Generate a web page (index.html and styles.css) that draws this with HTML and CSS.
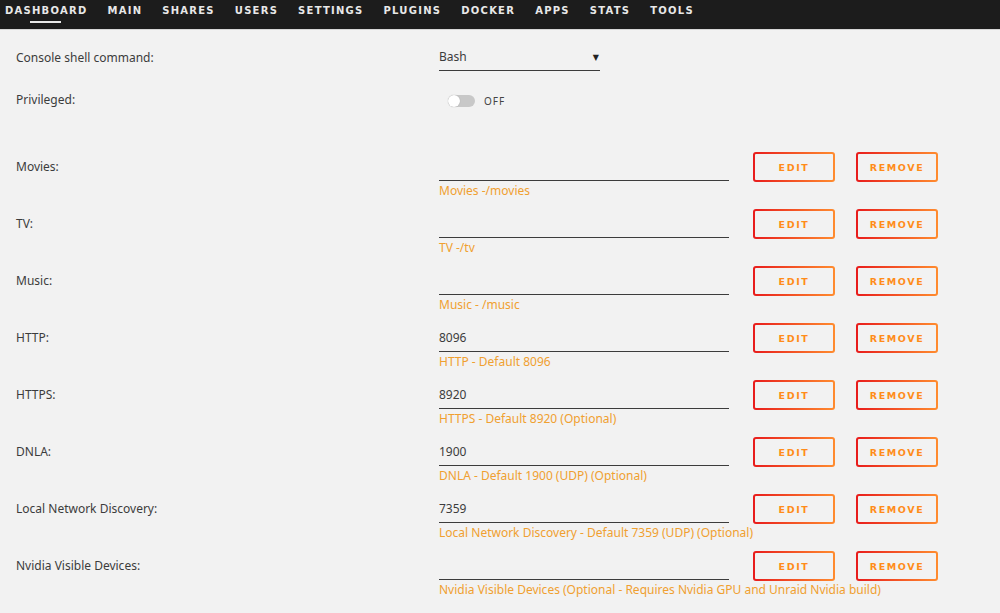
FILE: index.html
```html
<!DOCTYPE html>
<html>
<head>
    <title>Docker - Edit Container</title>
    <link rel="stylesheet" href="styles.css">
</head>
<body>
    <div class="nav">
        <a class="nav-item active">DASHBOARD</a>
        <a class="nav-item">MAIN</a>
        <a class="nav-item">SHARES</a>
        <a class="nav-item">USERS</a>
        <a class="nav-item">SETTINGS</a>
        <a class="nav-item">PLUGINS</a>
        <a class="nav-item">DOCKER</a>
        <a class="nav-item">APPS</a>
        <a class="nav-item">STATS</a>
        <a class="nav-item">TOOLS</a>
    </div>

    <div class="content">
        <div class="top-row">
            <div class="label">Console shell command:</div>
            <div class="select">Bash<span class="caret">▼</span></div>
        </div>
        <div class="top-row">
            <div class="label">Privileged:</div>
            <div class="switch"><span class="track"><span class="knob"></span></span><span class="switch-text">OFF</span></div>
        </div>

        <div class="config-list">
            <div class="config-row">
                <div class="label">Movies:</div>
                <div class="field"><div class="input"></div><div class="desc">Movies -/movies</div></div>
                <button class="grad-btn">EDIT</button>
                <button class="grad-btn">REMOVE</button>
            </div>
            <div class="config-row">
                <div class="label">TV:</div>
                <div class="field"><div class="input"></div><div class="desc">TV -/tv</div></div>
                <button class="grad-btn">EDIT</button>
                <button class="grad-btn">REMOVE</button>
            </div>
            <div class="config-row">
                <div class="label">Music:</div>
                <div class="field"><div class="input"></div><div class="desc">Music - /music</div></div>
                <button class="grad-btn">EDIT</button>
                <button class="grad-btn">REMOVE</button>
            </div>
            <div class="config-row">
                <div class="label">HTTP:</div>
                <div class="field"><div class="input">8096</div><div class="desc">HTTP - Default 8096</div></div>
                <button class="grad-btn">EDIT</button>
                <button class="grad-btn">REMOVE</button>
            </div>
            <div class="config-row">
                <div class="label">HTTPS:</div>
                <div class="field"><div class="input">8920</div><div class="desc">HTTPS - Default 8920 (Optional)</div></div>
                <button class="grad-btn">EDIT</button>
                <button class="grad-btn">REMOVE</button>
            </div>
            <div class="config-row">
                <div class="label">DNLA:</div>
                <div class="field"><div class="input">1900</div><div class="desc">DNLA - Default 1900 (UDP) (Optional)</div></div>
                <button class="grad-btn">EDIT</button>
                <button class="grad-btn">REMOVE</button>
            </div>
            <div class="config-row">
                <div class="label">Local Network Discovery:</div>
                <div class="field"><div class="input">7359</div><div class="desc">Local Network Discovery - Default 7359 (UDP) (Optional)</div></div>
                <button class="grad-btn">EDIT</button>
                <button class="grad-btn">REMOVE</button>
            </div>
            <div class="config-row">
                <div class="label">Nvidia Visible Devices:</div>
                <div class="field"><div class="input"></div><div class="desc">Nvidia Visible Devices (Optional - Requires Nvidia GPU and Unraid Nvidia build)</div></div>
                <button class="grad-btn">EDIT</button>
                <button class="grad-btn">REMOVE</button>
            </div>
        </div>
    </div>
</body>
</html>
```

FILE: styles.css
```css
body { margin:0; background:#f2f2f2; font-family:"Noto Sans","DejaVu Sans",sans-serif; font-size:12px; color:#3c3c3c; overflow:hidden; }

/* top menu */
.nav {
    height:29px;
    background:#1c1c1c;
    border-bottom:1px solid #d6d6d6;
    display:flex;
    gap:20px;
    padding-left:5px;
}
.nav-item {
    position:relative;
    color:#e8e8e8;
    font-family:"DejaVu Sans",sans-serif;
    font-weight:bold;
    font-size:10px;
    letter-spacing:1.25px;
    line-height:21px;
}
.nav-item.active:after {
    content:"";
    position:absolute;
    left:25px; width:31px;
    top:21px; height:2px;
    background:#e8e8e8;
}

.content { padding-left:16px; }
.label { width:423px; line-height:14px; padding-top:20px; }

.top-row { display:flex; height:43px; }
.top-row:first-child .label { padding-top:21px; }
.select {
    margin-top:13px;
    width:161px; height:20px;
    padding-top:7px;
    box-sizing:content-box;
    line-height:14px;
    border-bottom:1px solid #3c3c3c;
    display:flex;
    justify-content:space-between;
}
.caret { font-size:8px; color:#222; padding-right:1px; }
.switch { display:flex; align-items:center; gap:9px; padding:21px 0 0 9px; height:14px; }
.track { width:27px; height:12px; background:#c8c8c8; border-radius:6px; position:relative; }
.knob { position:absolute; left:0; top:0; width:12px; height:12px; border-radius:50%; background:#fff; box-shadow:0 0 1px #999; }
.switch-text { font-size:10px; letter-spacing:1px; color:#444; }

.config-list { margin-top:36px; }
.config-row { display:flex; align-items:flex-start; height:57px; }
.config-row .label { padding-top:8px; }
.field { width:290px; }
.input {
    line-height:14px;
    box-sizing:border-box;
    height:29px;
    padding-top:8px;
    border-bottom:1px solid #3c3c3c;
}
.desc { margin-top:2px; line-height:16px; color:#f0a030; white-space:nowrap; }

.grad-btn {
    margin:0 0 0 24px;
    width:82px; height:30px;
    border:2px solid transparent;
    border-radius:3px;
    background:linear-gradient(#f2f2f2,#f2f2f2) padding-box, linear-gradient(90deg,#e81c1c,#ff8c2f) border-box;
    color:#ff8c1a;
    font-family:"DejaVu Sans",sans-serif;
    font-weight:bold;
    font-size:9.5px;
    letter-spacing:1.6px;
    padding:0;
}
.grad-btn + .grad-btn { margin-left:21px; }
```
